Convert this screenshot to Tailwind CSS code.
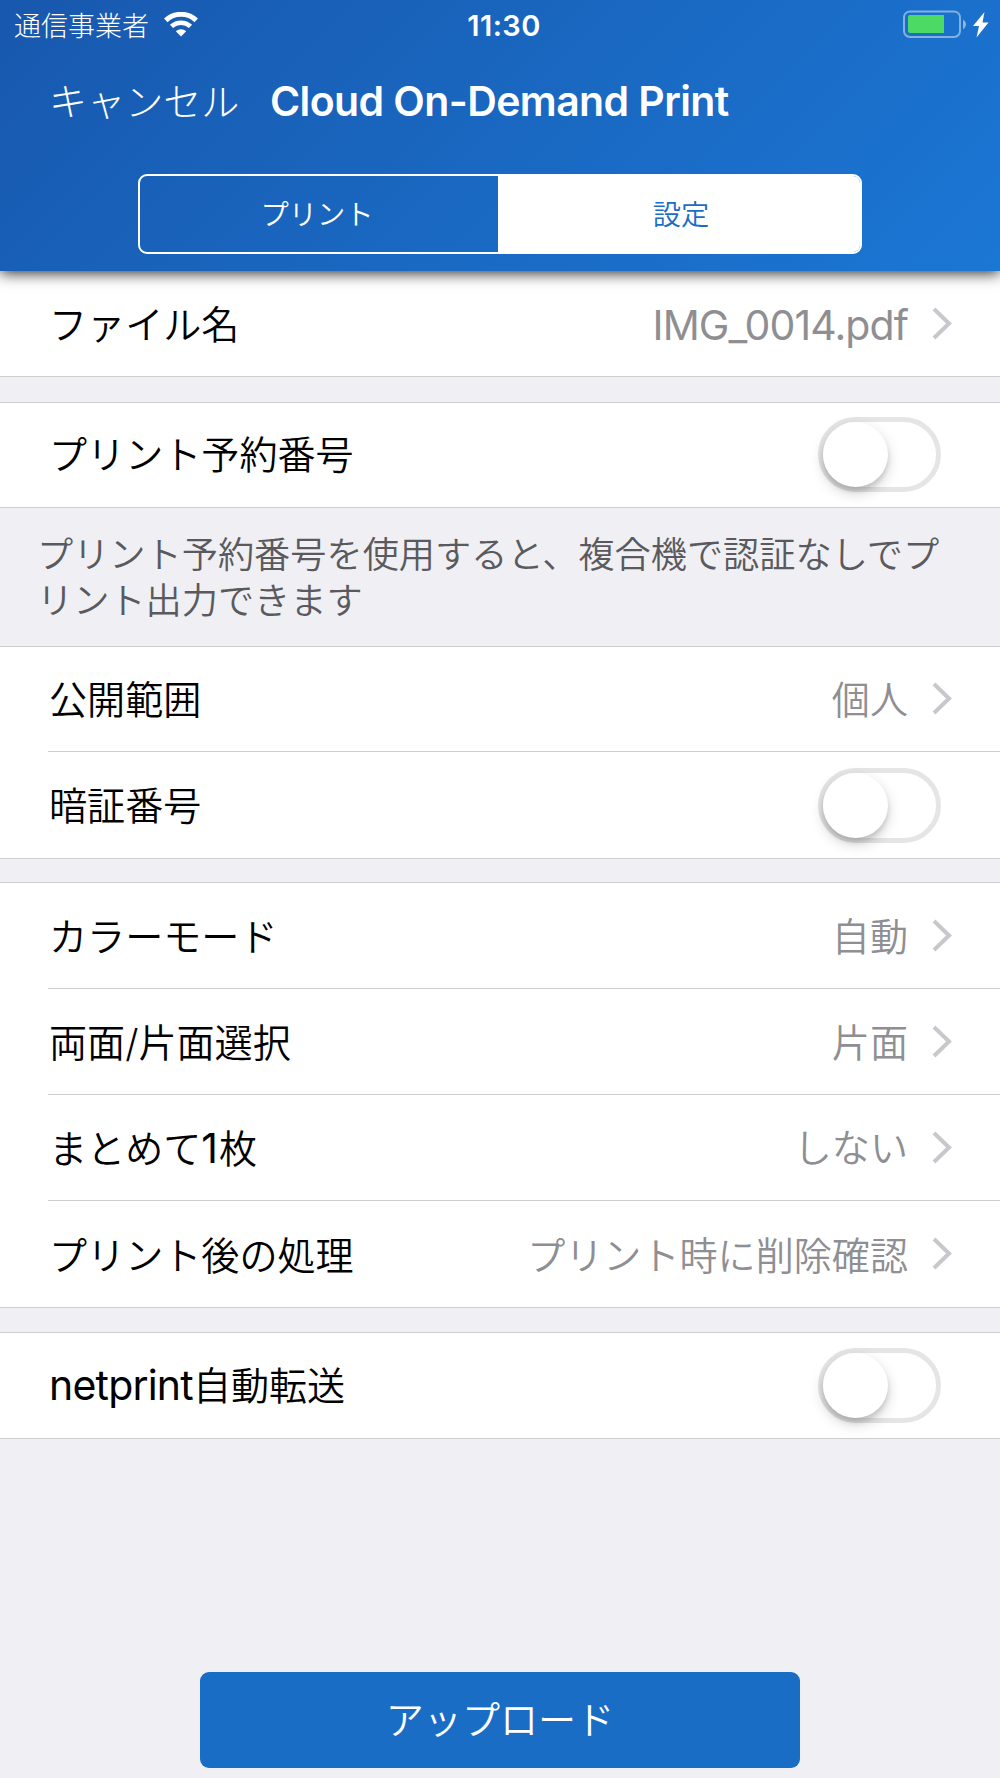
<!DOCTYPE html>
<html lang="ja">
<head>
    <meta charset="UTF-8">
    <meta name="viewport" content="width=device-width, initial-scale=1.0">
    <title>Cloud On-Demand Print</title>
    <script src="https://cdn.jsdelivr.net/npm/@tailwindcss/browser@4"></script>
    <style>
        body {
            font-family: 'Inter', 'Noto Sans CJK JP', sans-serif;
        }
    </style>
</head>
<body class="w-[1000px] h-[1778px] bg-[#efeff4] text-black text-[38.1px] leading-none font-[350] overflow-hidden flex flex-col">
    <!-- ヘッダー -->
    <header class="relative z-10 shrink-0 h-[271px] bg-linear-[135deg] from-[#1858ae] to-[#1b77d4] text-white shadow-[0_2px_14px_rgba(0,0,0,0.85)]">
        <!-- ステータスバー -->
        <div class="grid grid-cols-3 items-center h-[50px]">
            <div class="flex items-center gap-[15px] pl-[14px] pt-px">
                <span class="text-[27px] font-light whitespace-nowrap pt-px">通信事業者</span>
                <svg class="w-[34px] h-[25px] mb-0.5" viewBox="0 0 34 25" fill="none" stroke="white">
                    <path d="M1.8 8.4A22 22 0 0 1 32.2 8.4" stroke-width="5"/>
                    <path d="M7.5 14.4A14 14 0 0 1 26.5 14.4" stroke-width="4.6"/>
                    <path d="M17 24.5L11.8 19.3A7.6 7.6 0 0 1 22.2 19.3Z" fill="white" stroke="none"/>
                </svg>
            </div>
            <div class="text-center text-[29px] font-semibold tracking-[0.4px] pl-2">11:30</div>
            <svg class="justify-self-end mr-[10px] w-[88px] h-[30px]" viewBox="0 0 88 30">
                <rect x="2" y="1.4" width="56" height="25.6" rx="6" fill="none" stroke="white" stroke-opacity="0.45" stroke-width="2"/>
                <path d="M8 5H42V23H8Q6 23 6 21V7Q6 5 8 5Z" fill="#4cd964"/>
                <path d="M61 9.5Q64 11.5 64 14.5T61 19.5Z" fill="white" fill-opacity="0.5"/>
                <path d="M82.5 2L71 16H77L74.5 27.5L86.5 12.5H80.5Z" fill="white"/>
            </svg>
        </div>
        <!-- タイトル -->
        <div class="flex items-center h-[104px] pl-[49px]">
            <button class="w-[221px] text-left font-light whitespace-nowrap">キャンセル</button>
            <h1 class="text-[41px] font-semibold tracking-[-0.6px] whitespace-nowrap pb-0.5">Cloud On-Demand Print</h1>
        </div>
        <!-- タブ -->
        <div class="grid grid-cols-[358px_1fr] w-[724px] h-[80px] mx-auto mt-5 rounded-[9px] border-2 border-white overflow-hidden text-[28.3px]">
            <button class="pr-1 pt-0.5">プリント</button>
            <button class="bg-white text-[#1a6dc6] pl-1 pt-0.5">設定</button>
        </div>
    </header>

    <main class="flex flex-col">
        <section class="bg-white border-b border-[#cecdd2]">
            <div class="flex items-center h-[105px] pl-[49px] pr-[48px]">
                <span class="flex-1 pt-1">ファイル名</span>
                <span class="text-[#8e8e93] text-[41px] font-normal tracking-[-0.9px] pt-1">IMG_0014.pdf</span>
                <svg class="w-[20px] h-[34px] ml-6" viewBox="0 0 20 34" fill="none" stroke="#c7c7cc" stroke-width="4"><path d="M2 2L17 16.5L2 31"/></svg>
            </div>
        </section>

        <section class="mt-[25px] bg-white border-y border-[#cecdd2]">
            <div class="flex items-center h-[104px] pl-[49px] pr-[59px]">
                <span class="flex-1 pt-px">プリント予約番号</span>
                <span class="w-[123px] h-[75px] mb-0.5 rounded-full border-[5px] border-[#e5e5e5] bg-white">
                    <span class="block size-[65px] rounded-full bg-white shadow-[0_6px_14px_rgba(0,0,0,0.18),0_4px_5px_rgba(0,0,0,0.12)]"></span>
                </span>
            </div>
        </section>

        <p class="h-[138px] pt-[24px] pl-[37px] text-[36.2px] leading-[46px] text-[#5a5a5e] whitespace-nowrap">プリント予約番号を使用すると、複合機で認証なしでプ<br>リント出力できます</p>

        <section class="bg-white border-y border-[#cecdd2]">
            <div class="flex items-center h-[104px] pl-[49px] pr-[48px]">
                <span class="flex-1 pt-0.5">公開範囲</span>
                <span class="text-[#8e8e93] pt-0.5">個人</span>
                <svg class="w-[20px] h-[34px] ml-6" viewBox="0 0 20 34" fill="none" stroke="#c7c7cc" stroke-width="4"><path d="M2 2L17 16.5L2 31"/></svg>
            </div>
            <hr class="ml-12 border-[#cecdd2]">
            <div class="flex items-center h-[106px] pl-[49px] pr-[59px]">
                <span class="flex-1 pt-0.5">暗証番号</span>
                <span class="w-[123px] h-[75px] rounded-full border-[5px] border-[#e5e5e5] bg-white">
                    <span class="block size-[65px] rounded-full bg-white shadow-[0_6px_14px_rgba(0,0,0,0.18),0_4px_5px_rgba(0,0,0,0.12)]"></span>
                </span>
            </div>
        </section>

        <section class="mt-[23px] bg-white border-y border-[#cecdd2]">
            <div class="flex items-center h-[105px] pl-[49px] pr-[48px]">
                <span class="flex-1 pt-1">カラーモード</span>
                <span class="text-[#8e8e93] pt-1">自動</span>
                <svg class="w-[20px] h-[34px] ml-6" viewBox="0 0 20 34" fill="none" stroke="#c7c7cc" stroke-width="4"><path d="M2 2L17 16.5L2 31"/></svg>
            </div>
            <hr class="ml-12 border-[#cecdd2]">
            <div class="flex items-center h-[105px] pl-[49px] pr-[48px]">
                <span class="flex-1 pt-1">両面/片面選択</span>
                <span class="text-[#8e8e93] pt-1">片面</span>
                <svg class="w-[20px] h-[34px] ml-6" viewBox="0 0 20 34" fill="none" stroke="#c7c7cc" stroke-width="4"><path d="M2 2L17 16.5L2 31"/></svg>
            </div>
            <hr class="ml-12 border-[#cecdd2]">
            <div class="flex items-center h-[105px] pl-[49px] pr-[48px]">
                <span class="flex-1 pt-0.5">まとめて<span class="text-[41px] font-normal tracking-[1px]">1</span>枚</span>
                <span class="text-[#8e8e93] pt-0.5">しない</span>
                <svg class="w-[20px] h-[34px] ml-6" viewBox="0 0 20 34" fill="none" stroke="#c7c7cc" stroke-width="4"><path d="M2 2L17 16.5L2 31"/></svg>
            </div>
            <hr class="ml-12 border-[#cecdd2]">
            <div class="flex items-center h-[106px] pl-[49px] pr-[48px]">
                <span class="flex-1 pt-1">プリント後の処理</span>
                <span class="text-[#8e8e93] pt-1">プリント時に削除確認</span>
                <svg class="w-[20px] h-[34px] ml-6" viewBox="0 0 20 34" fill="none" stroke="#c7c7cc" stroke-width="4"><path d="M2 2L17 16.5L2 31"/></svg>
            </div>
        </section>

        <section class="mt-[24px] bg-white border-y border-[#cecdd2]">
            <div class="flex items-center h-[105px] pl-[49px] pr-[59px]">
                <span class="flex-1"><span class="text-[41px] font-normal tracking-[-0.8px]">netprint</span>自動転送</span>
                <span class="w-[123px] h-[75px] rounded-full border-[5px] border-[#e5e5e5] bg-white">
                    <span class="block size-[65px] rounded-full bg-white shadow-[0_6px_14px_rgba(0,0,0,0.18),0_4px_5px_rgba(0,0,0,0.12)]"></span>
                </span>
            </div>
        </section>
    </main>

    <!-- アップロードボタン -->
    <button class="shrink-0 w-[600px] h-[96px] mx-auto mt-auto mb-[10px] rounded-[9px] bg-[#1a6dc5] text-white">アップロード</button>
</body>
</html>
